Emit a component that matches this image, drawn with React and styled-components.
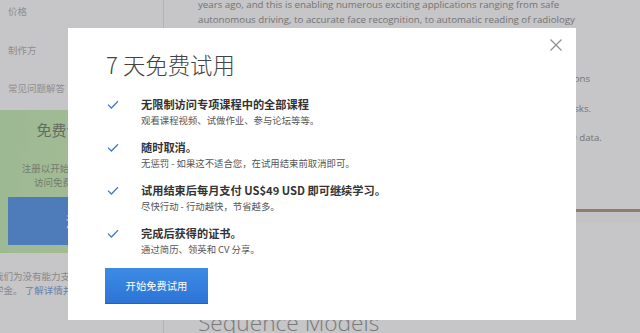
import React from "react";
import styled, { createGlobalStyle } from "styled-components";

const GlobalStyle = createGlobalStyle`
  html, body {
    margin: 0;
    padding: 0;
    width: 640px;
    height: 333px;
    overflow: hidden;
    background: #ffffff;
  }
  * {
    box-sizing: border-box;
  }
`;

const cjk = `"Noto Sans CJK SC", "Noto Sans", sans-serif`;
const latin = `"Open Sans", "Noto Sans CJK SC", sans-serif`;

const Page = styled.div`
  display: flex;
  width: 640px;
  height: 333px;
  overflow: hidden;
  background: #ffffff;
`;

/* ---------- left sidebar ---------- */

const Sidebar = styled.aside`
  width: 164px;
  flex-shrink: 0;
  display: flex;
  flex-direction: column;
  border-right: 1px solid #e6e6e6;
  font-family: ${cjk};
`;

const NavList = styled.ul`
  list-style: none;
  margin: -8px 0 0;
  padding: 0;
`;

const NavItem = styled.li`
  height: 38.5px;
  display: flex;
  align-items: center;
  padding-left: 8px;
  font-size: 9.5px;
  color: #b8b8b8;
  white-space: nowrap;
`;

const TrialBox = styled.div`
  margin-top: 2px;
  height: 143px;
  padding: 10px 8px 8px;
  display: flex;
  flex-direction: column;
  align-items: center;
  background: linear-gradient(100deg, #c8f0bd 0%, #d2f2bd 55%, #e4f0b8 100%);
`;

const TrialHeading = styled.div`
  font-size: 15px;
  line-height: 20px;
  color: #808a7c;
  white-space: nowrap;
`;

const TrialText = styled.div`
  font-size: 9.5px;
  line-height: 14px;
  color: #93a08e;
  white-space: nowrap;
  margin-top: ${(p) => p.$gap || 0}px;
`;

const SignupButton = styled.div`
  margin-top: 8px;
  width: 100%;
  height: 48px;
  display: flex;
  align-items: center;
  justify-content: center;
  background: #629ff0;
  color: #ffffff;
  font-size: 14px;
  letter-spacing: 2px;
`;

const AidNote = styled.p`
  margin: 16px 0 0 -6px;
  font-size: 9.5px;
  line-height: 14px;
  color: #b0b0b0;
  white-space: nowrap;
  a {
    color: #7ea7dc;
    text-decoration: none;
  }
`;

/* ---------- main column ---------- */

const Main = styled.main`
  flex: 1;
  display: flex;
  flex-direction: column;
  font-family: ${latin};
`;

const Description = styled.div`
  padding-left: 34px;
  margin-top: -2px;
  height: 211px;
  flex-shrink: 0;
  color: #959595;
  font-size: 9.7px;
`;

const Line = styled.div`
  height: 14.6px;
  line-height: 14.6px;
  white-space: nowrap;
  padding-left: ${(p) => (p.$bullet ? "7px" : "0")};
  margin-top: ${(p) => (p.$gap ? "16.1px" : "0")};
`;

const Banner = styled.div`
  height: 3px;
  flex-shrink: 0;
  background: #b7a184;
`;

const TabStrip = styled.div`
  height: 12px;
  flex-shrink: 0;
  border-bottom: 1px solid #ffffff;
  background: #fcfcfc;
`;

const CourseTitle = styled.h1`
  margin: 83px 0 0 34px;
  font-family: ${latin};
  font-weight: 300;
  font-size: 22.7px;
  color: #9b9b9b;
  white-space: nowrap;
`;

/* ---------- modal ---------- */

const Overlay = styled.div`
  position: fixed;
  inset: 0;
  background: rgba(18, 12, 22, 0.24);
  display: flex;
  align-items: flex-start;
  padding: 28px 0 0 68px;
`;

const Modal = styled.div`
  position: relative;
  width: 508px;
  height: 292px;
  background: #ffffff;
  padding: 19px 38px 0;
  font-family: ${cjk};
  display: flex;
  flex-direction: column;
  align-items: flex-start;
`;

const CloseButton = styled.button`
  position: absolute;
  top: 10px;
  right: 13px;
  width: 14px;
  height: 14px;
  padding: 0;
  border: none;
  background: transparent;
  display: flex;
  align-items: center;
  justify-content: center;
  cursor: pointer;
`;

const Title = styled.h2`
  margin: 0;
  font-size: 22.4px;
  line-height: 34px;
  font-weight: 300;
  color: #444444;
`;

const BenefitList = styled.ul`
  list-style: none;
  margin: 15px 0 0;
  padding: 0;
  display: flex;
  flex-direction: column;
  gap: 12px;
`;

const Benefit = styled.li`
  display: grid;
  grid-template-columns: 35px 1fr;
  height: 31px;
`;

const Check = styled.span`
  display: flex;
  align-items: center;
  padding-left: 1px;
  height: 17px;
`;

const BenefitTitle = styled.div`
  font-size: 11.2px;
  line-height: 17px;
  font-weight: 700;
  color: #333333;
  white-space: nowrap;
`;

const BenefitText = styled.div`
  font-size: 9.4px;
  line-height: 14px;
  color: #555555;
  white-space: nowrap;
`;

const StartButton = styled.button`
  margin: 12px 0 0 -1px;
  width: 103px;
  height: 36px;
  border: none;
  border-bottom: 1px solid #2462b8;
  background: linear-gradient(180deg, #3e8be6 0%, #2c74d6 100%);
  color: #ffffff;
  font-family: ${cjk};
  font-size: 10.3px;
  cursor: pointer;
`;

const CheckIcon = () => (
  <svg width="12" height="9" viewBox="0 0 12 9">
    <polyline
      points="1,4.6 4.4,8 11,1.2"
      fill="none"
      stroke="#3f7cc4"
      strokeWidth="1.3"
    />
  </svg>
);

const CloseIcon = () => (
  <svg width="12" height="12" viewBox="0 0 12 12">
    <path d="M0.5 0.5 L11.5 11.5 M11.5 0.5 L0.5 11.5" stroke="#8c8c8c" strokeWidth="1.1" />
  </svg>
);

const benefits = [
  {
    title: "无限制访问专项课程中的全部课程",
    text: "观看课程视频、试做作业、参与论坛等等。",
  },
  {
    title: "随时取消。",
    text: "无惩罚 - 如果这不适合您，在试用结束前取消即可。",
  },
  {
    title: "试用结束后每月支付 US$49 USD 即可继续学习。",
    text: "尽快行动 - 行动越快，节省越多。",
  },
  {
    title: "完成后获得的证书。",
    text: "通过简历、领英和 CV 分享。",
  },
];

const App = () => {
  return (
    <>
      <GlobalStyle />
      <Page>
        <Sidebar>
          <NavList>
            <NavItem>价格</NavItem>
            <NavItem>制作方</NavItem>
            <NavItem>常见问题解答</NavItem>
          </NavList>
          <TrialBox>
            <TrialHeading>免费试用课程</TrialHeading>
            <TrialText $gap={21}>注册以开始您的7天免费试用</TrialText>
            <TrialText>访问免费课程视频内容</TrialText>
            <SignupButton>注册</SignupButton>
          </TrialBox>
          <AidNote>
            我们为没有能力支付费用的学习者提供助
            <br />
            学金。 <a href="#">了解详情并申请</a>
          </AidNote>
        </Sidebar>
        <Main>
          <Description>
            <Line>years ago, and this is enabling numerous exciting applications ranging from safe</Line>
            <Line>autonomous driving, to accurate face recognition, to automatic reading of radiology</Line>
            <Line>images.</Line>
            <Line $gap>You will:</Line>
            <Line $bullet>- Understand how to build a convolutional neural network, including recent variations</Line>
            <Line $bullet>such as residual networks.</Line>
            <Line $bullet>- Know how to apply convolutional networks to visual detection and recognition tasks.</Line>
            <Line $bullet>- Know to use neural style transfer to generate art.</Line>
            <Line $bullet>- Be able to apply these algorithms to a variety of image, video, and other 2D or 3D data.</Line>
          </Description>
          <Banner />
          <TabStrip />
          <CourseTitle>Sequence Models</CourseTitle>
        </Main>
      </Page>
      <Overlay>
        <Modal>
          <CloseButton aria-label="close">
            <CloseIcon />
          </CloseButton>
          <Title>7 天免费试用</Title>
          <BenefitList>
            {benefits.map((b) => (
              <Benefit key={b.title}>
                <Check>
                  <CheckIcon />
                </Check>
                <div>
                  <BenefitTitle>{b.title}</BenefitTitle>
                  <BenefitText>{b.text}</BenefitText>
                </div>
              </Benefit>
            ))}
          </BenefitList>
          <StartButton>开始免费试用</StartButton>
        </Modal>
      </Overlay>
    </>
  );
};

export default App;
